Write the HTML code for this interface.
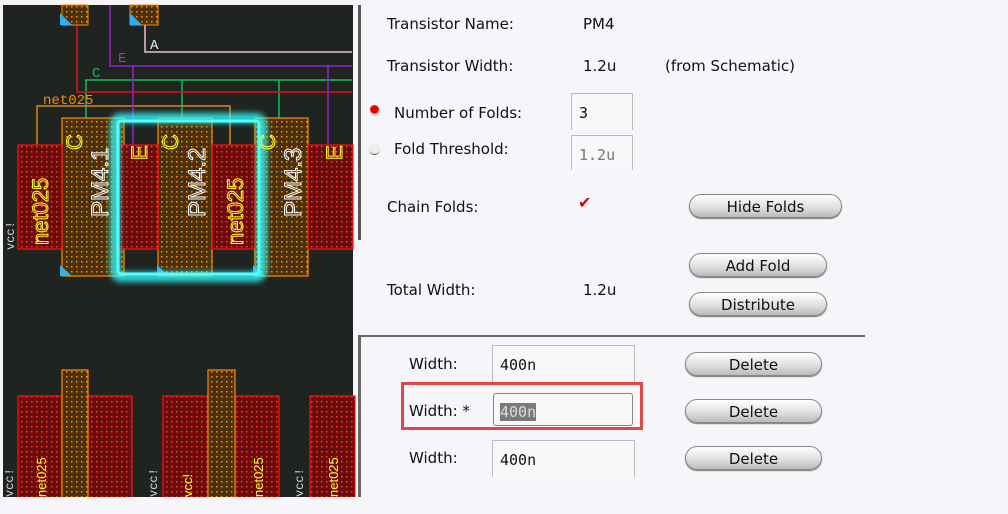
<!DOCTYPE html>
<html><head><style>
body{margin:0;width:1008px;height:514px;background:#f6f5f9;position:relative;overflow:hidden;font-family:"DejaVu Sans","Liberation Sans",sans-serif;font-size:15px;color:#111}
.t{position:absolute;white-space:nowrap;line-height:18px}
.btn{position:absolute;height:22px;border:1px solid #888;border-radius:12px;background:linear-gradient(#fff,#ddd 60%,#bbb);text-align:center;line-height:24px;font-size:15px;box-shadow:0 1px 1px #777}
.fld{position:absolute;border:1px solid #bbb;border-bottom:none;background:#f8f8fa;font-family:"DejaVu Sans Mono","Liberation Mono",monospace;font-size:15px;padding-left:7px;line-height:38px}
</style></head><body>
<svg style="position:absolute;left:0;top:0" width="360" height="514">
<defs>
<pattern id="pr" width="5" height="5" patternUnits="userSpaceOnUse"><rect width="5" height="5" fill="#6a0c0c"/><rect x="1" y="1" width="1.5" height="1.5" fill="#ff4020"/></pattern>
<pattern id="po" width="5" height="5" patternUnits="userSpaceOnUse"><rect width="5" height="5" fill="#4a300c"/><rect x="1" y="1" width="1.5" height="1.5" fill="#ff9000"/></pattern>
<filter id="gl"><feGaussianBlur stdDeviation="3"/></filter>
</defs>
<rect x="3" y="5" width="350" height="492" fill="#1f2420"/>
<g fill="none" stroke-width="1.5">
<path d="M110 5V66H352" stroke="#9a20d0"/>
<path d="M145 25V52H352" stroke="#e8c0e0"/>
<path d="M85 80H352M86 80V125M182 80V125M279 80V125" stroke="#10c050"/>
<path d="M77 25V92H352" stroke="#e01010"/>
<path d="M37 145V106H230V145" stroke="#e08020"/>
<path d="M133 66V145M328 66V145" stroke="#9a20d0"/>
</g>
<text x="118" y="62" fill="#a030e0" font-size="14" font-family="Liberation Mono">E</text>
<text x="150" y="49" fill="#eee" font-size="14" font-family="Liberation Mono">A</text>
<text x="92" y="77" fill="#10c050" font-size="14" font-family="Liberation Mono">C</text>
<text x="43" y="104" fill="#ff8a00" font-size="14" font-family="Liberation Mono">net025</text>
<rect x="62" y="5" width="26" height="20" fill="url(#po)" stroke="#ff8a00"/>
<rect x="130" y="5" width="28" height="20" fill="url(#po)" stroke="#ff8a00"/>
<path d="M60 13V25H72Z M130 13V25H142Z" fill="#30b0f0"/>
<g stroke-width="1.2">
<rect x="62" y="118" width="62" height="158" fill="url(#po)" stroke="#ff8a00"/>
<rect x="158" y="118" width="54" height="158" fill="url(#po)" stroke="#ff8a00"/>
<rect x="255" y="118" width="53" height="158" fill="url(#po)" stroke="#ff8a00"/>
<rect x="18" y="145" width="44" height="104" fill="url(#pr)" stroke="#ff1010"/>
<rect x="117" y="145" width="41" height="104" fill="url(#pr)" stroke="#ff1010"/>
<rect x="212" y="145" width="43" height="104" fill="url(#pr)" stroke="#ff1010"/>
<rect x="308" y="145" width="45" height="104" fill="url(#pr)" stroke="#ff1010"/>
</g>
<path d="M60 265V276H72Z M157 265V276H169Z M253 265V276H265Z" fill="#30b0f0"/>
<rect x="115" y="118" width="147" height="159" rx="6" fill="none" stroke="#30ffff" stroke-width="10" filter="url(#gl)" opacity=".8"/>
<rect x="118" y="121" width="141" height="153" rx="3" fill="none" stroke="#50ffff" stroke-width="3"/>
<g font-family="Liberation Sans" font-size="22" fill="none" stroke="#ffff30" stroke-width="1">
<text transform="translate(48,245) rotate(-90)">net025</text>
<text transform="translate(243,245) rotate(-90)">net025</text>
<text transform="translate(147,160) rotate(-90)">E</text>
<text transform="translate(342,160) rotate(-90)">E</text>
<text transform="translate(82,150) rotate(-90)">C</text>
<text transform="translate(178,150) rotate(-90)">C</text>
<text transform="translate(275,150) rotate(-90)">C</text>
</g>
<g font-family="Liberation Sans" font-size="24" fill="none" stroke="#fff" stroke-width="1">
<text transform="translate(108,217) rotate(-90)">PM4.1</text>
<text transform="translate(205,217) rotate(-90)">PM4.2</text>
<text transform="translate(301,217) rotate(-90)">PM4.3</text>
</g>
<text transform="translate(14,250) rotate(-90)" fill="#ddd" font-size="12" font-family="Liberation Mono">vcc!</text>
<g stroke-width="1.2">
<rect x="18" y="396" width="44" height="110" fill="url(#pr)" stroke="#ff1010"/>
<rect x="88" y="396" width="44" height="110" fill="url(#pr)" stroke="#ff1010"/>
<rect x="62" y="370" width="26" height="140" fill="url(#po)" stroke="#ff8a00"/>
<rect x="163" y="396" width="45" height="110" fill="url(#pr)" stroke="#ff1010"/>
<rect x="235" y="396" width="44" height="110" fill="url(#pr)" stroke="#ff1010"/>
<rect x="208" y="370" width="27" height="140" fill="url(#po)" stroke="#ff8a00"/>
<rect x="310" y="396" width="45" height="110" fill="url(#pr)" stroke="#ff1010"/>
</g>
<g font-family="Liberation Sans" font-size="13" fill="#ffff30">
<text transform="translate(46,497) rotate(-90)">net025</text>
<text transform="translate(263,497) rotate(-90)">net025</text>
<text transform="translate(338,497) rotate(-90)">net025</text>
<text transform="translate(192,497) rotate(-90)">vcc!</text>
</g>
<g font-family="Liberation Mono" font-size="12" fill="#ddd">
<text transform="translate(13,497) rotate(-90)">vcc!</text>
<text transform="translate(157,497) rotate(-90)">vcc!</text>
<text transform="translate(303,497) rotate(-90)">vcc!</text>
</g>
<rect x="0" y="497" width="360" height="17" fill="#f6f5f9"/>
</svg>
<div style="position:absolute;left:358px;top:5px;width:3px;height:235px;background:#555"></div>
<div style="position:absolute;left:358px;top:335px;width:507px;height:2px;background:#666"></div>
<div style="position:absolute;left:358px;top:335px;width:3px;height:162px;background:#666"></div>

<div class="t" style="left:387px;top:15px">Transistor Name:</div>
<div class="t" style="left:583px;top:15px">PM4</div>
<div class="t" style="left:387px;top:57px">Transistor Width:</div>
<div class="t" style="left:583px;top:57px">1.2u</div>
<div class="t" style="left:665px;top:57px">(from Schematic)</div>
<div style="position:absolute;left:369px;top:105px;width:11px;height:11px;border-radius:50%;background:radial-gradient(circle at 50% 40%,#e00 45%,#ddd 55%)"></div>
<div class="t" style="left:394px;top:104px">Number of Folds:</div>
<div class="fld" style="left:571px;top:93px;width:53px;height:36px">3</div>
<div style="position:absolute;left:369px;top:143px;width:11px;height:11px;border-radius:50%;background:#eee;border-bottom:1px solid #666"></div>
<div class="t" style="left:394px;top:140px">Fold Threshold:</div>
<div class="fld" style="left:571px;top:135px;width:53px;height:34px;color:#777">1.2u</div>
<div class="t" style="left:387px;top:198px">Chain Folds:</div>
<div class="t" style="left:578px;top:194px;color:#d00;font-size:16px">✔</div>
<div class="btn" style="left:689px;top:194px;width:151px">Hide Folds</div>
<div class="btn" style="left:689px;top:253px;width:136px">Add Fold</div>
<div class="t" style="left:387px;top:281px">Total Width:</div>
<div class="t" style="left:583px;top:281px">1.2u</div>
<div class="btn" style="left:689px;top:292px;width:136px">Distribute</div>

<div class="t" style="left:409px;top:355px">Width:</div>
<div class="fld" style="left:492px;top:345px;width:134px;height:36px">400n</div>
<div class="btn" style="left:685px;top:352px;width:135px">Delete</div>
<div style="position:absolute;left:401px;top:382px;width:242px;height:48px;border:3px solid #e04848;box-sizing:border-box"></div>
<div class="t" style="left:409px;top:402px">Width: *</div>
<div style="position:absolute;left:493px;top:393px;width:140px;height:33px;border:1px solid #888;border-radius:3px;background:#f8f8fa;box-sizing:border-box"></div>
<div class="t" style="left:500px;top:403px;background:#7a7a7a;color:#ddd;font-family:'DejaVu Sans Mono',monospace;font-size:15px">400n</div>
<div class="btn" style="left:685px;top:399px;width:135px">Delete</div>
<div class="t" style="left:409px;top:449px">Width:</div>
<div class="fld" style="left:492px;top:440px;width:134px;height:36px">400n</div>
<div class="btn" style="left:685px;top:446px;width:135px">Delete</div>
</body></html>
